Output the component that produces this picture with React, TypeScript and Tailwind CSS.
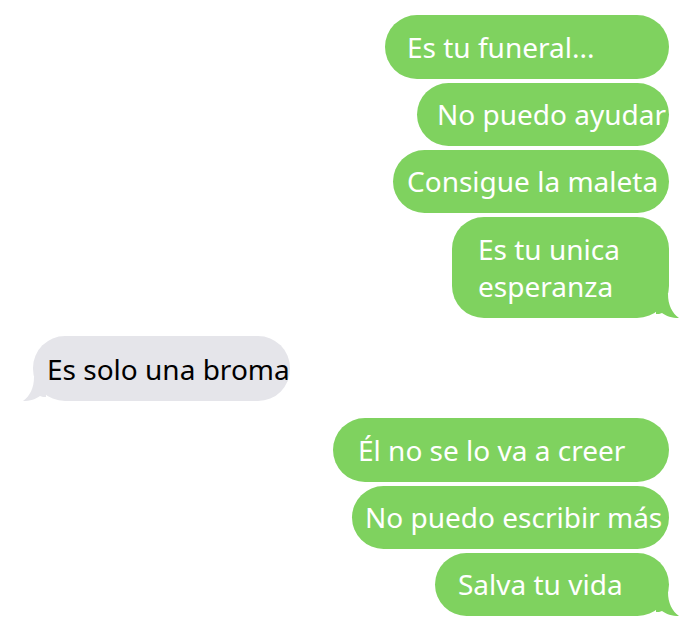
import React from "react";

const font = { fontFamily: '"Noto Sans", "Open Sans", sans-serif' };

function TailRight() {
  return (
    <svg className="absolute right-[-11px] bottom-0" width="24" height="24" viewBox="0 0 24 24">
      <path d="M0 0 L12 0 C12 11 16 19 23 24 C16 24 10 22 6 19 C4 20 2 20 0 20 Z" fill="#7fd25f" />
    </svg>
  );
}

function TailLeft() {
  return (
    <svg className="absolute left-[-11px] bottom-0" width="24" height="24" viewBox="0 0 24 24">
      <path d="M24 0 L12 0 C12 11 8 19 1 24 C8 24 14 22 18 19 C20 20 22 20 24 20 Z" fill="#e5e5ea" />
    </svg>
  );
}

function Green({ w, h, pl, children, tail }: { w: string; h: string; pl: string; children: React.ReactNode; tail?: boolean }) {
  return (
    <div className={`relative ${w} ${h} ${pl} rounded-[32px] bg-[#7fd25f] text-white text-[28px] leading-[37px] flex items-center`}>
      <div>{children}</div>
      {tail && <TailRight />}
    </div>
  );
}

export default function App() {
  return (
    <div className="w-[700px] h-[630px] bg-white overflow-hidden" style={font}>
      <div className="flex flex-col items-end pr-[31px] pt-[15px] gap-[4px]">
        <Green w="w-[284px]" h="h-[64px]" pl="pl-[22px]">Es tu funeral...</Green>
        <Green w="w-[252px]" h="h-[63px]" pl="pl-[20px]">No puedo ayudar</Green>
        <Green w="w-[276px]" h="h-[63px]" pl="pl-[14px]">Consigue la maleta</Green>
        <Green w="w-[217px]" h="h-[101px]" pl="pl-[26px]" tail>
          Es tu unica
          <br />
          esperanza
        </Green>
      </div>
      <div className="pl-[33px] mt-[18px]">
        <div className="relative w-[257px] h-[65px] rounded-[32px] bg-[#e5e5ea] text-black text-[28px] pl-[14px] flex items-center">
          Es solo una broma
          <TailLeft />
        </div>
      </div>
      <div className="flex flex-col items-end pr-[31px] mt-[17px] gap-[4px]">
        <Green w="w-[336px]" h="h-[64px]" pl="pl-[25px]">Él no se lo va a creer</Green>
        <Green w="w-[317px]" h="h-[63px]" pl="pl-[13px]">No puedo escribir más</Green>
        <Green w="w-[234px]" h="h-[63px]" pl="pl-[23px]" tail>Salva tu vida</Green>
      </div>
    </div>
  );
}
